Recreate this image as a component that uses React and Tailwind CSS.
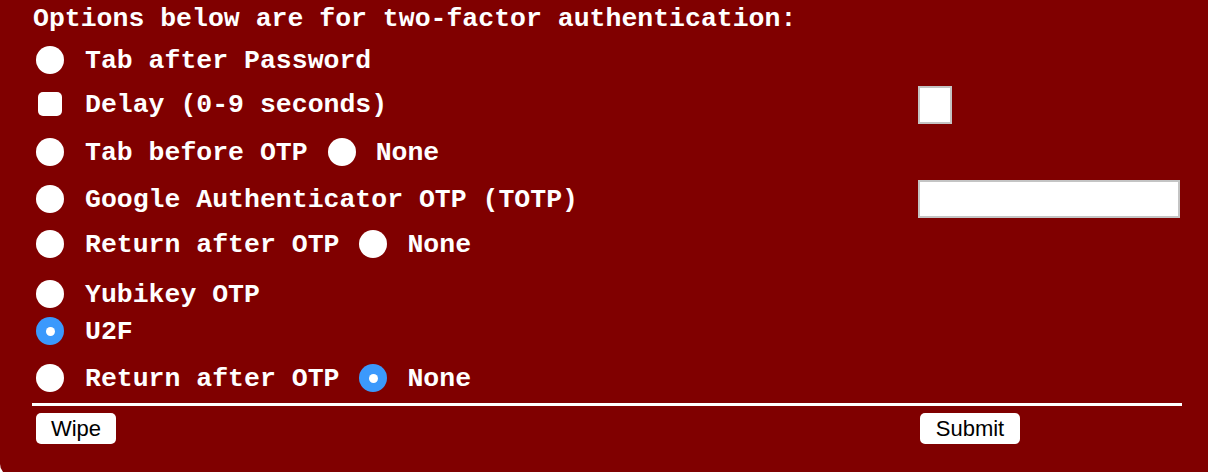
const Radio = ({ checked }) =>
    checked ? (
        <span className="w-[28px] h-[28px] rounded-full bg-[#3b99fc] flex items-center justify-center shrink-0">
            <span className="w-[9px] h-[9px] rounded-full bg-white" />
        </span>
    ) : (
        <span className="w-[28px] h-[28px] rounded-full bg-white shrink-0" />
    );

const Label = ({ children }) => <span className="whitespace-pre pt-[2px]">{children}</span>;

const Option = ({ checked, label, none, noneChecked }) => (
    <div className="flex items-center">
        <span className="ml-[4px] mr-[21px] flex">
            <Radio checked={checked} />
        </span>
        <Label>{label}</Label>
        {none !== undefined && (
            <>
                <span className="ml-[20px] mr-[20px] flex">
                    <Radio checked={noneChecked} />
                </span>
                <Label>None</Label>
            </>
        )}
    </div>
);

const App = () => {
    return (
        <div className="w-[1208px] h-[472px] overflow-hidden bg-white">
            <div className="h-[476px] bg-[#800000] rounded-bl-[12px] pl-[32px] text-white font-['Liberation_Mono',monospace] font-bold text-[26.5px] leading-none">
                <div className="w-[1150px]">
                    <div className="h-[36px] flex items-center pl-[1px]">
                        <Label>Options below are for two-factor authentication:</Label>
                    </div>

                    <div className="h-[48px] flex items-center">
                        <Option label="Tab after Password" />
                    </div>

                    <div className="h-[40px] grid grid-cols-[886px_1fr] items-center">
                        <div className="flex items-center">
                            <span className="ml-[6px] mr-[23px] w-[24px] h-[24px] rounded-[5px] bg-white shrink-0" />
                            <Label>Delay (0-9 seconds)</Label>
                        </div>
                        <div className="mt-[2px] w-[34px] h-[38px] bg-white border-2 border-[#c4c4c4]" />
                    </div>

                    <div className="h-[56px] flex items-center">
                        <Option label="Tab before OTP" none />
                    </div>

                    <div className="h-[36px] grid grid-cols-[886px_1fr] items-center">
                        <Option label="Google Authenticator OTP (TOTP)" />
                        <div className="w-[262px] h-[38px] bg-white border-2 border-[#c4c4c4]" />
                    </div>

                    <div className="h-[56px] flex items-center">
                        <Option label="Return after OTP" none />
                    </div>

                    <div className="h-[44px] flex items-center">
                        <Option label="Yubikey OTP" />
                    </div>

                    <div className="h-[30px] flex items-center">
                        <Option checked label="U2F" />
                    </div>

                    <div className="mt-[10px] h-[44px] flex items-center">
                        <Option label="Return after OTP" none noneChecked />
                    </div>

                    <div className="mt-[3px] h-[3px] bg-white" />

                    <div className="mt-[7px] grid grid-cols-[888px_1fr] font-['Liberation_Sans',sans-serif] font-normal text-[22px] text-black">
                        <button className="ml-[4px] w-[80px] h-[31px] bg-white rounded-[5px] flex items-center justify-center">
                            Wipe
                        </button>
                        <button className="w-[100px] h-[31px] bg-white rounded-[5px] flex items-center justify-center">
                            Submit
                        </button>
                    </div>
                </div>
            </div>
        </div>
    );
};

export default App;
